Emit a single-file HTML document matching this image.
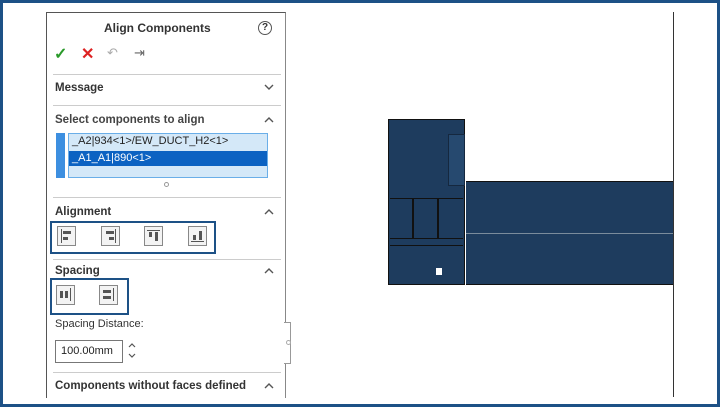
<!DOCTYPE html><html><head><style>
body{margin:0;width:720px;height:407px;overflow:hidden;background:#fff;font-family:"Liberation Sans",sans-serif;}
.frame{position:absolute;left:0;top:0;width:714px;height:401px;border:3px solid #1d5186;}
.a{position:absolute;}
.t{position:absolute;font-size:11.5px;color:#333;font-weight:bold;white-space:nowrap;}
.sep{position:absolute;left:53px;width:228px;height:1px;background:#ccc;}
.car{position:absolute;left:264px;width:10px;height:6px;}
.ic{position:absolute;width:17px;height:18px;border:1px solid #888;background:#f3f3f3;}
.ic i{position:absolute;background:#555;}
</style></head><body>
<div class="frame"></div>
<div class="a" style="left:46px;top:12px;width:238px;height:385px;border-left:1px solid #555;border-top:1px solid #555;border-right:1px solid #888;"></div>
<div class="t" style="left:104px;top:21px;font-size:12px;">Align Components</div>
<div class="a" style="left:258px;top:21px;width:12px;height:12px;border:1.5px solid #555;border-radius:50%;font-size:10px;text-align:center;line-height:12px;color:#333;font-weight:bold">?</div>
<div class="a" style="left:54px;top:44px;color:#2a9a2a;font-size:16px;font-weight:bold">✓</div>
<div class="a" style="left:81px;top:44px;color:#d22;font-size:16px;font-weight:bold">✕</div>
<div class="a" style="left:107px;top:45px;color:#aaa;font-size:13px">↶</div>
<div class="a" style="left:134px;top:45px;color:#666;font-size:13px">⇥</div>
<div class="sep" style="top:74px"></div>
<div class="t" style="left:55px;top:82px">Message</div>
<svg class="car" style="top:84px" viewBox="0 0 10 6"><path d="M1 1L5 5L9 1" fill="none" stroke="#555" stroke-width="1.4"/></svg>
<div class="sep" style="top:105px"></div>
<div class="t" style="left:55px;top:114px;font-weight:bold;color:#444">Select components to align</div>
<svg class="car" style="top:117px" viewBox="0 0 10 6"><path d="M1 5L5 1L9 5" fill="none" stroke="#555" stroke-width="1.4"/></svg>
<div class="a" style="left:56px;top:133px;width:9px;height:45px;background:#3d8fe0"></div>
<div class="a" style="left:68px;top:133px;width:198px;height:43px;border:1px solid #6aaee8;background:#d4e8f8"></div>
<div class="a" style="left:72px;top:135px;font-size:11px;color:#222">_A2|934&lt;1&gt;/EW_DUCT_H2&lt;1&gt;</div>
<div class="a" style="left:69px;top:151px;width:198px;height:15px;background:#0c62c2"></div>
<div class="a" style="left:72px;top:152px;font-size:11px;color:#fff">_A1_A1|890&lt;1&gt;</div>
<div class="a" style="left:164px;top:182px;width:3px;height:3px;border:1px solid #999;border-radius:50%"></div>
<div class="sep" style="top:197px"></div>
<div class="t" style="left:55px;top:206px">Alignment</div>
<svg class="car" style="top:209px" viewBox="0 0 10 6"><path d="M1 5L5 1L9 5" fill="none" stroke="#555" stroke-width="1.4"/></svg>
<div class="a" style="left:50px;top:221px;width:162px;height:29px;border:2px solid #1d5186"></div>
<div class="ic" style="left:57px;top:226px"><i style="left:3px;top:2px;width:1px;height:14px"></i><i style="left:5px;top:4px;width:8px;height:3px"></i><i style="left:5px;top:10px;width:5px;height:3px"></i></div>
<div class="ic" style="left:101px;top:226px"><i style="left:13px;top:2px;width:1px;height:14px"></i><i style="left:4px;top:4px;width:8px;height:3px"></i><i style="left:7px;top:10px;width:5px;height:3px"></i></div>
<div class="ic" style="left:144px;top:226px"><i style="left:2px;top:3px;width:13px;height:1px"></i><i style="left:4px;top:5px;width:3px;height:5px"></i><i style="left:10px;top:5px;width:3px;height:9px"></i></div>
<div class="ic" style="left:188px;top:226px"><i style="left:2px;top:14px;width:13px;height:1px"></i><i style="left:4px;top:8px;width:3px;height:5px"></i><i style="left:10px;top:4px;width:3px;height:9px"></i></div>
<div class="sep" style="top:259px"></div>
<div class="t" style="left:55px;top:265px">Spacing</div>
<svg class="car" style="top:268px" viewBox="0 0 10 6"><path d="M1 5L5 1L9 5" fill="none" stroke="#555" stroke-width="1.4"/></svg>
<div class="a" style="left:50px;top:278px;width:75px;height:33px;border:2px solid #1d5186"></div>
<div class="ic" style="left:56px;top:285px"><i style="left:3px;top:5px;width:3px;height:7px"></i><i style="left:8px;top:5px;width:3px;height:7px"></i><i style="left:13px;top:2px;width:1px;height:13px"></i></div>
<div class="ic" style="left:99px;top:285px"><i style="left:3px;top:4px;width:8px;height:3px"></i><i style="left:3px;top:10px;width:8px;height:3px"></i><i style="left:13px;top:2px;width:1px;height:13px"></i></div>
<div class="a" style="left:55px;top:318px;font-size:11px;color:#333">Spacing Distance:</div>
<div class="a" style="left:55px;top:340px;width:66px;height:21px;border:1px solid #777;font-size:11px;line-height:21px;text-indent:5px;color:#222">100.00mm</div>
<svg class="a" style="left:128px;top:342px" width="8" height="18" viewBox="0 0 8 18"><path d="M1 5L4 2L7 5M1 12L4 15L7 12" fill="none" stroke="#555" stroke-width="1.2"/></svg>
<div class="sep" style="top:372px"></div>
<div class="t" style="left:55px;top:380px">Components without faces defined</div>
<svg class="car" style="top:383px" viewBox="0 0 10 6"><path d="M1 5L5 1L9 5" fill="none" stroke="#555" stroke-width="1.4"/></svg>
<div class="a" style="left:284px;top:322px;width:6px;height:40px;border:1px solid #999;border-left:none;background:#fff"></div>
<div class="a" style="left:286px;top:340px;width:3px;height:3px;border:1px solid #aaa;border-radius:50%"></div>
<div class="a" style="left:673px;top:12px;width:1px;height:385px;background:#333"></div>
<div class="a" style="left:388px;top:119px;width:77px;height:166px;background:#1e3c5e;border:1px solid #111;box-sizing:border-box"></div>
<div class="a" style="left:448px;top:134px;width:15px;height:50px;background:#26496f;border:1px solid #15283f"></div>
<div class="a" style="left:390px;top:198px;width:73px;height:1px;background:#111"></div>
<div class="a" style="left:390px;top:238px;width:73px;height:1px;background:#111"></div>
<div class="a" style="left:390px;top:245px;width:73px;height:1px;background:#111"></div>
<div class="a" style="left:412px;top:198px;width:2px;height:40px;background:#111"></div>
<div class="a" style="left:437px;top:198px;width:2px;height:40px;background:#111"></div>
<div class="a" style="left:436px;top:268px;width:6px;height:7px;background:#fff"></div>
<div class="a" style="left:466px;top:181px;width:207px;height:104px;background:#1e3c5e;border-top:1px solid #111;border-bottom:1px solid #111;box-sizing:border-box"></div>
<div class="a" style="left:466px;top:233px;width:207px;height:1px;background:#7b8c9c"></div>
</body></html>
